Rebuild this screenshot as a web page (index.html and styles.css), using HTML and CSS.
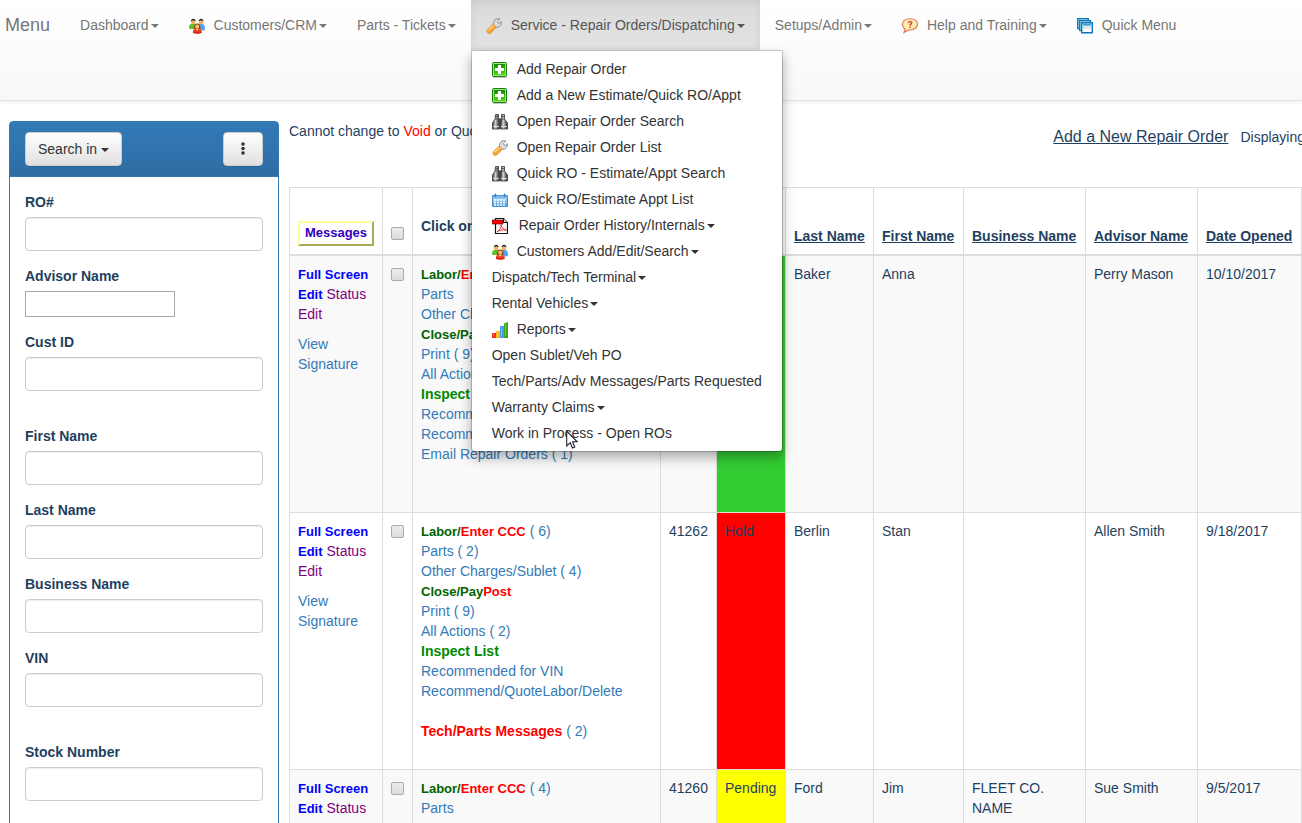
FILE: index.html
```html
<!DOCTYPE html>
<html lang="en">
<head>
<meta charset="utf-8">
<title>Repair Orders</title>
<link rel="stylesheet" href="styles.css">
</head>
<body>
<svg class="sprite" aria-hidden="true">
  <defs>
    <linearGradient id="g-green" x1="0" y1="0" x2="0" y2="1"><stop offset="0" stop-color="#128a05"/><stop offset="1" stop-color="#55d916"/></linearGradient>
    <linearGradient id="g-orange" x1="0" y1="0" x2="1" y2="1"><stop offset="0" stop-color="#ffd36b"/><stop offset="1" stop-color="#ec8713"/></linearGradient>
    <linearGradient id="g-steel" x1="0" y1="0" x2="1" y2="0"><stop offset="0" stop-color="#333"/><stop offset=".4" stop-color="#d4d4d8"/><stop offset="1" stop-color="#222"/></linearGradient>
    <linearGradient id="g-sky" x1="0" y1="0" x2="0" y2="1"><stop offset="0" stop-color="#d9efff"/><stop offset="1" stop-color="#3f97e0"/></linearGradient>
    <linearGradient id="g-red" x1="0" y1="0" x2="0" y2="1"><stop offset="0" stop-color="#ff6a3c"/><stop offset="1" stop-color="#d81408"/></linearGradient>
  </defs>
  <symbol id="i-plus" viewBox="0 0 16 16">
    <rect x=".5" y=".5" width="14" height="14" rx="1" fill="#9be77a" stroke="#1a7c10"/>
    <rect x="2" y="2" width="11" height="11" fill="url(#g-green)"/>
    <path d="M6 3h3v3h3v3H9v3H6V9H3V6h3z" fill="#fff"/>
    <path d="M1 15.500h14" stroke="#bbb" stroke-width=".8"/>
  </symbol>
  <symbol id="i-binoculars" viewBox="0 0 16 16">
    <path d="M3.500.5h3v3l1 3v8.500h-7V9L3 5z" fill="url(#g-steel)" stroke="#333" stroke-width=".8"/>
    <path d="M9.500.5h3v4.500l3 4v6h-7V6.500l1-3z" fill="url(#g-steel)" stroke="#333" stroke-width=".8"/>
    <path d="M3 2.500h4M9 2.500h4M3 5h10" stroke="#555"/>
    <path d="M6.500 5h3v5h-3z" fill="#444"/>
    <path d="M1 12.500h6M9 12.500h6" stroke="#eee" stroke-width=".8"/>
  </symbol>
  <symbol id="i-wrench" viewBox="0 0 16 16">
    <path d="M7.500 8V4L10 .8h4L11.500 3.500l.5 1.500 1.500.3L15.300 3.500v3L12.500 9.300H9.500L8.500 10z" fill="#dcdce0" stroke="#8b8b90" stroke-width=".9"/>
    <path d="M7 6 10.300 9.200l-5.500 5.700c-2 1.800-5.200-.8-3.500-3z" fill="url(#g-orange)" stroke="#d98424" stroke-width=".7"/>
    <path d="m2.800 12 4.500-4.500" stroke="#ffe6a8"/>
  </symbol>
  <symbol id="i-calendar" viewBox="0 0 16 16">
    <path d="M.5 3.500h15v11H.5z" fill="url(#g-sky)" stroke="#4b91cf"/>
    <path d="M1 4h14v2.500H1z" fill="#7dbbef"/>
    <path d="M2 8h12M2 10.500h12M2 13h12" stroke="#fff" stroke-width="1.500" stroke-dasharray="2 1"/>
    <path d="M3.500 1.500v3.500M12.500 1.500v3.500" stroke="#3978b4" stroke-width="1.300"/>
  </symbol>
  <symbol id="i-pdf" viewBox="0 0 16 16">
    <path d="M3.500.5h8l4 4v11h-12z" fill="#fff" stroke="#111" stroke-width="1.200"/>
    <path d="M4.500 9h10M4.500 11h10M4.500 13h10M4.500 7h10" stroke="#d5d5d5" stroke-dasharray="1 1"/>
    <path d="M11.500.5v4h4" fill="#ddd" stroke="#111"/>
    <path d="M0 2h11v4H0z" fill="#f00" stroke="#300" stroke-width=".6"/>
    <path d="M5 14c3-2 4.500-5 4-7.500.3 3 2.500 5 5.500 5.500-4-.5-7 0-9.500 2z" fill="none" stroke="#e43737"/>
  </symbol>
  <symbol id="i-people" viewBox="0 0 16 16">
    <path d="M0 9.500C0 6.500 1.700 5.500 4.200 5.500S8 7 8 11H1.500C.5 11 0 10.500 0 9.500z" fill="#5cc02a"/>
    <path d="M8 11c0-4 1.500-5.500 4-5.500s4 1.500 4 4.500-1.500 2.500-3 2.500z" fill="#4aa6ee"/>
    <circle cx="4.200" cy="3.900" r="2.300" fill="#f0b35a"/><path d="M1.800 3.300C2-.2 6.500-.2 6.700 3.300L4.200 2.300z" fill="#222"/>
    <circle cx="12" cy="3.900" r="2.300" fill="#f0b35a"/><path d="M9.600 3.300c.2-3.500 4.700-3.500 4.900 0L12 2.300z" fill="#222"/>
    <path d="M4 15c-.3-3 .5-5 4.300-5s4.700 2 4.400 5c-2 1-6.700 1-8.700 0z" fill="url(#g-red)"/>
    <path d="M5 10.800c-.8-7 7.300-7 6.500 0z" fill="#9c4318"/><circle cx="8.200" cy="8.500" r="2" fill="#ffbd66"/>
    <path d="m7 10.800 1.200 2 1.200-2z" fill="#fbdba0"/>
  </symbol>
  <symbol id="i-chart" viewBox="0 0 16 16">
    <path d="M0 11h4v5H0z" fill="#e8301d"/><path d="M4 9h4v7H4z" fill="#f5b51c"/>
    <path d="M8 4h4v12H8z" fill="#4b9be8"/><path d="M12 1.500 16 0v16h-4z" fill="#3aa51a"/>
    <path d="M1.500 11.500v3M5.500 9.500v5M9.500 4.500v10M13.500 2v12" stroke="#fff" stroke-opacity=".3"/>
  </symbol>
  <symbol id="i-help" viewBox="0 0 16 16">
    <path d="M8 .7c4.500 0 7.500 2.300 7.500 5.500S12.500 12 8 12H6.500L2 14.500l1.200-3.300C1.300 10 .5 8.200.5 6.200.5 3 3.500.7 8 .7z" fill="#ffeab0" stroke="#dc7552" stroke-width="1.100"/>
    <path d="M6.300 4.800C6.500 3.200 9.900 3.300 9.700 5c-.1 1.200-1.700 1.200-1.700 2.700M8 8.800v1.300" fill="none" stroke="#c5491f" stroke-width="1.400"/>
  </symbol>
  <symbol id="i-windows" viewBox="0 0 16 16">
    <path d="M.7.7h10.600v10H.7z" fill="#a9dcf5" stroke="#0b79b5" stroke-width="1.300"/>
    <path d="M2.700 2.700h10.600v10H2.700z" fill="#a9dcf5" stroke="#0b79b5" stroke-width="1.300"/>
    <path d="M4.700 4.700h10.600v10H4.700z" fill="#f9fcfe" stroke="#0b79b5" stroke-width="1.400"/>
    <path d="M6 6.700h8" stroke="#36a2dc" stroke-width="2"/><path d="M6 9.500h8" stroke="#ddd" stroke-width="2"/>
  </symbol>
</svg>

<nav class="navbar">
  <a class="brand" href="#">Menu</a>
  <ul class="nav">
    <li><a href="#">Dashboard<span class="caret"></span></a></li>
    <li><a href="#"><svg class="icon"><use href="#i-people"/></svg>Customers/CRM<span class="caret"></span></a></li>
    <li><a href="#">Parts - Tickets<span class="caret"></span></a></li>
    <li class="open">
      <a href="#"><svg class="icon"><use href="#i-wrench"/></svg>Service - Repair Orders/Dispatching<span class="caret"></span></a>
      <ul class="menu">
        <li><a href="#"><svg class="icon"><use href="#i-plus"/></svg>Add Repair Order</a></li>
        <li><a href="#"><svg class="icon"><use href="#i-plus"/></svg>Add a New Estimate/Quick RO/Appt</a></li>
        <li><a href="#"><svg class="icon"><use href="#i-binoculars"/></svg>Open Repair Order Search</a></li>
        <li><a href="#"><svg class="icon"><use href="#i-wrench"/></svg>Open Repair Order List</a></li>
        <li><a href="#"><svg class="icon"><use href="#i-binoculars"/></svg>Quick RO - Estimate/Appt Search</a></li>
        <li><a href="#"><svg class="icon"><use href="#i-calendar"/></svg>Quick RO/Estimate Appt List</a></li>
        <li><a href="#"><svg class="icon icon-wide"><use href="#i-pdf"/></svg>Repair Order History/Internals<span class="caret"></span></a></li>
        <li><a href="#"><svg class="icon"><use href="#i-people"/></svg>Customers Add/Edit/Search<span class="caret"></span></a></li>
        <li><a href="#">Dispatch/Tech Terminal<span class="caret"></span></a></li>
        <li><a href="#">Rental Vehicles<span class="caret"></span></a></li>
        <li><a href="#"><svg class="icon"><use href="#i-chart"/></svg>Reports<span class="caret"></span></a></li>
        <li><a href="#">Open Sublet/Veh PO</a></li>
        <li><a href="#">Tech/Parts/Adv Messages/Parts Requested</a></li>
        <li><a href="#">Warranty Claims<span class="caret"></span></a></li>
        <li><a href="#">Work in Process - Open ROs</a>
          <svg class="pointer" viewBox="0 0 12 19"><path d="M.7 1v15l3.500-3.300 2.300 5.300 2.300-1-2.300-5.200h4.700z" fill="#fff" stroke="#223" stroke-width="1.100"/></svg>
        </li>
      </ul>
    </li>
    <li><a href="#">Setups/Admin<span class="caret"></span></a></li>
    <li><a href="#"><svg class="icon"><use href="#i-help"/></svg>Help and Training<span class="caret"></span></a></li>
    <li><a href="#"><svg class="icon"><use href="#i-windows"/></svg>Quick Menu</a></li>
  </ul>
</nav>

<div class="page">
  <aside class="panel">
    <div class="panel-heading">
      <button class="btn" type="button">Search in <span class="caret"></span></button>
      <button class="btn" type="button" aria-label="More"><svg class="dots" viewBox="0 0 14 14"><g fill="#333"><circle cx="7" cy="2" r="1.800"/><circle cx="7" cy="6.500" r="1.800"/><circle cx="7" cy="11" r="1.800"/></g></svg></button>
    </div>
    <form class="panel-body">
      <div class="group"><label for="ro">RO#</label><input class="control" id="ro" type="text"></div>
      <div class="group"><label for="advisor">Advisor Name</label><input class="plain" id="advisor" type="text"></div>
      <div class="group spaced"><label for="cust">Cust ID</label><input class="control" id="cust" type="text"></div>
      <div class="group"><label for="first">First Name</label><input class="control" id="first" type="text"></div>
      <div class="group"><label for="last">Last Name</label><input class="control" id="last" type="text"></div>
      <div class="group"><label for="business">Business Name</label><input class="control" id="business" type="text"></div>
      <div class="group spaced"><label for="vin">VIN</label><input class="control" id="vin" type="text"></div>
      <div class="group"><label for="stock">Stock Number</label><input class="control" id="stock" type="text"></div>
    </form>
  </aside>

  <main class="main">
    <div class="toolbar">
      <span>Cannot change to <span class="red">Void</span> or Quote</span>
      <span class="toolbar-right"><a class="new-order" href="#">Add a New Repair Order</a><span>Displaying</span></span>
    </div>
    <table class="orders">
      <colgroup><col class="w-edit"><col class="w-check"><col><col class="w-ro"><col class="w-status"><col class="w-last"><col class="w-first"><col class="w-business"><col class="w-advisor"><col class="w-date"></colgroup>
      <thead>
        <tr>
          <th><button class="messages" type="button">Messages</button></th>
          <th><input class="check" type="checkbox" aria-label="Select all"></th>
          <th><p>Click on</p></th>
          <th></th>
          <th></th>
          <th><a href="#">Last Name</a></th>
          <th><a href="#">First Name</a></th>
          <th><a href="#">Business Name</a></th>
          <th><a href="#">Advisor Name</a></th>
          <th><a href="#">Date Opened</a></th>
        </tr>
      </thead>
      <tbody>
        <tr>
          <td><p><a class="blue" href="#">Full Screen Edit</a> <a class="purple" href="#">Status Edit</a></p><a href="#">View Signature</a></td>
          <td><input class="check" type="checkbox" aria-label="Select order"></td>
          <td><ul class="actions">
            <li><a class="dark" href="#">Labor/</a><a class="alert" href="#">Enter CCC</a></li>
            <li><a href="#">Parts</a></li>
            <li><a href="#">Other Charges/Sublet</a></li>
            <li><a class="dark" href="#">Close/Pay</a></li>
            <li><a href="#">Print ( 9)</a></li>
            <li><a href="#">All Actions</a></li>
            <li><a class="green" href="#">Inspect List</a></li>
            <li><a href="#">Recommended for VIN</a></li>
            <li><a href="#">Recommend/QuoteLabor/Delete</a></li>
            <li><a href="#">Email Repair Orders ( 1)</a></li>
          </ul></td>
          <td></td>
          <td class="open-status"></td>
          <td>Baker</td><td>Anna</td><td></td><td>Perry Mason</td><td>10/10/2017</td>
        </tr>
        <tr>
          <td><p><a class="blue" href="#">Full Screen Edit</a> <a class="purple" href="#">Status Edit</a></p><a href="#">View Signature</a></td>
          <td><input class="check" type="checkbox" aria-label="Select order 41262"></td>
          <td><ul class="actions">
            <li><a class="dark" href="#">Labor/</a><a class="alert" href="#">Enter CCC</a> <a href="#">( 6)</a></li>
            <li><a href="#">Parts ( 2)</a></li>
            <li><a href="#">Other Charges/Sublet ( 4)</a></li>
            <li><a class="dark" href="#">Close/Pay</a><a class="alert" href="#">Post</a></li>
            <li><a href="#">Print ( 9)</a></li>
            <li><a href="#">All Actions ( 2)</a></li>
            <li><a class="green" href="#">Inspect List</a></li>
            <li><a href="#">Recommended for VIN</a></li>
            <li><a href="#">Recommend/QuoteLabor/Delete</a></li>
            <li class="separate"><a class="red" href="#"><b>Tech/Parts Messages</b></a> <a href="#">( 2)</a></li>
          </ul></td>
          <td>41262</td>
          <td class="hold-status">Hold</td>
          <td>Berlin</td><td>Stan</td><td></td><td>Allen Smith</td><td>9/18/2017</td>
        </tr>
        <tr>
          <td><p><a class="blue" href="#">Full Screen Edit</a> <a class="purple" href="#">Status</a></p></td>
          <td><input class="check" type="checkbox" aria-label="Select order 41260"></td>
          <td><ul class="actions">
            <li><a class="dark" href="#">Labor/</a><a class="alert" href="#">Enter CCC</a> <a href="#">( 4)</a></li>
            <li><a href="#">Parts</a></li>
          </ul></td>
          <td>41260</td>
          <td class="pending-status">Pending</td>
          <td>Ford</td><td>Jim</td><td>FLEET CO. NAME</td><td>Sue Smith</td><td>9/5/2017</td>
        </tr>
      </tbody>
    </table>
  </main>
</div>
</body>
</html>
```

FILE: styles.css
```css
* { box-sizing: border-box; }

html { overflow: hidden; }

body {
  margin: 0;
  background: #fff;
  color: #1f3f60;
  font: 14px/20px "Liberation Sans", Arial, sans-serif;
}

a { color: #337ab7; text-decoration: none; }
ul { list-style: none; margin: 0; padding: 0; }
button, input { font: inherit; margin: 0; }

.sprite { position: absolute; width: 0; height: 0; }

/* Navigation */
.navbar {
  display: flex;
  align-items: flex-start;
  min-height: 101px;
  border-bottom: 1px solid #e2e2e2;
  background: linear-gradient(#fff, #f8f8f8);
  box-shadow: 0 1px 5px rgba(0, 0, 0, .075);
  white-space: nowrap;
}
.brand { padding: 15px 15px 15px 5px; color: #777; font-size: 18px; }
.nav { display: flex; }
.nav > li { position: relative; }
.nav > li > a { display: block; padding: 15px; color: #777; }
.nav > .open > a {
  background: linear-gradient(#dbdbdb, #e2e2e2);
  box-shadow: inset 0 3px 9px rgba(0, 0, 0, .075);
  color: #555;
}
.icon { width: 16px; height: 16px; margin-right: 9px; vertical-align: -4px; }
.menu .icon-wide { margin-right: 11px; }
.caret {
  display: inline-block;
  margin-left: 2px;
  vertical-align: middle;
  border-top: 4px solid;
  border-right: 4px solid transparent;
  border-left: 4px solid transparent;
}

.menu {
  position: absolute;
  top: 100%;
  left: 0;
  z-index: 10;
  min-width: 160px;
  padding: 5px 0;
  border: 1px solid rgba(0, 0, 0, .2);
  border-radius: 0 0 4px 4px;
  background: #fff;
  background-clip: padding-box;
  box-shadow: 0 6px 12px rgba(0, 0, 0, .3);
}
.menu li { position: relative; }
.menu a { display: block; padding: 3px 20px; color: #333; }
.pointer { position: absolute; top: 10px; left: 94px; width: 12px; height: 19px; }

/* Page columns */
.page { display: flex; gap: 10px; padding: 20px 0 0 9px; }

.panel {
  flex: 0 0 270px;
  border: 1px solid #337ab7;
  border-radius: 4px;
}
.panel-heading {
  display: flex;
  justify-content: space-between;
  padding: 10px 15px;
  border-bottom: 1px solid #337ab7;
  background: linear-gradient(#337ab7, #2e6da4);
}
.panel-body { padding: 15px; }
.btn {
  height: 34px;
  padding: 6px 12px;
  border: 1px solid #ccc;
  border-radius: 4px;
  background: linear-gradient(#fff, #e0e0e0);
  box-shadow: inset 0 1px 0 rgba(255, 255, 255, .15), 0 1px 1px rgba(0, 0, 0, .075);
  color: #333;
}
.btn .caret { margin-left: 0; }
.dots { display: block; width: 14px; height: 14px; }

.group { margin-bottom: 15px; }
.group.spaced { margin-bottom: 35px; }
.group label { display: block; margin-bottom: 5px; font-weight: bold; }
.control, .plain { display: block; background: #fff; }
.control {
  width: 100%;
  height: 34px;
  padding: 6px 12px;
  border: 1px solid #ccc;
  border-radius: 4px;
  box-shadow: inset 0 1px 1px rgba(0, 0, 0, .075);
}
.plain { width: 150px; height: 26px; border: 1px solid #a9a9a9; }

/* Orders */
.main { flex: 1; min-width: 0; }
.toolbar {
  display: flex;
  justify-content: space-between;
  margin-right: -3px;
  height: 66px;
  white-space: nowrap;
}
.toolbar-right { display: flex; align-items: baseline; gap: 12px; padding-top: 6px; }
.new-order { color: #1f3f60; font-size: 16px; text-decoration: underline; }

.orders { width: 100%; table-layout: fixed; border-collapse: collapse; }
.orders th, .orders td { padding: 8px; border: 1px solid #ddd; text-align: left; }
.orders th { height: 67px; border-bottom-width: 2px; vertical-align: bottom; white-space: nowrap; }
.orders th a { color: #1f3f60; text-decoration: underline; }
.orders td { height: 257px; vertical-align: top; }
.orders tbody tr:first-child td { height: 258px; }
.orders tbody tr:nth-child(odd) { background: #f9f9f9; }
.orders p { margin: 0 0 10px; }

.w-edit { width: 93px; }
.w-check { width: 30px; }
.w-ro { width: 56px; }
.w-status { width: 69px; }
.w-last { width: 88px; }
.w-first { width: 90px; }
.w-business { width: 122px; }
.w-advisor { width: 112px; }
.w-date { width: 104px; }

.messages {
  display: block;
  width: 100%;
  height: 25px;
  padding: 0;
  border: 2px solid;
  border-color: #ffff99 #aaaa55 #aaaa55 #ffff99;
  background: #fff;
  color: #3300bb;
  font-size: 13px;
  font-weight: bold;
}
.check {
  display: block;
  appearance: none;
  width: 13px;
  height: 13px;
  margin: 4px 0 6px;
  border: 1px solid #aaa;
  border-radius: 2px;
  background: linear-gradient(#ececec, #dcdcdc);
}

.blue, .dark, .alert { font-size: 13px; font-weight: bold; line-height: 1; }
.blue { color: #00f; }
.dark { color: #006400; }
.red, .alert { color: #f00; }
.purple { color: #800080; }
.green { color: #008b00; font-weight: bold; }
.actions li { height: 20px; }
.actions .separate { margin-top: 20px; }

.orders .open-status { background: #32cd32; }
.orders .hold-status { background: #f00; }
.orders .pending-status { background: #ff0; }
```
